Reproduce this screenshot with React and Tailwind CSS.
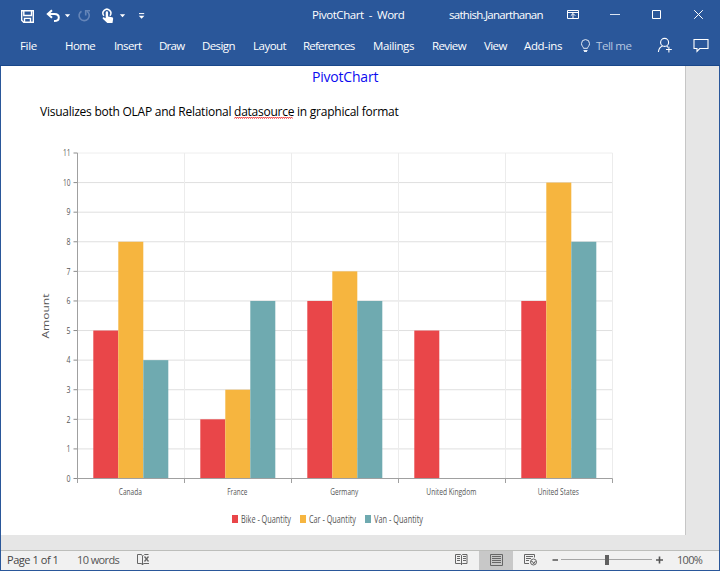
import React from 'react';

const tabs = [
  { label: 'File', width: 'w-[45px]', text: 'tracking-[-0.35px]' },
  { label: 'Home', width: 'w-[49px]', text: 'tracking-[-0.6px]' },
  { label: 'Insert', width: 'w-[45px]', text: 'tracking-[-0.6px]' },
  { label: 'Draw', width: 'w-[43px]', text: 'tracking-[-0.75px]' },
  { label: 'Design', width: 'w-[51px]', text: 'tracking-[-0.6px]' },
  { label: 'Layout', width: 'w-[50px]', text: 'tracking-[-0.5px]' },
  { label: 'References', width: 'w-[70px]', text: 'tracking-[-0.8px]' },
  { label: 'Mailings', width: 'w-[59px]', text: 'tracking-[-0.4px]' },
  { label: 'Review', width: 'w-[52px]', text: 'tracking-[-0.6px]' },
  { label: 'View', width: 'w-[40px]', text: 'tracking-[-0.6px]' },
  { label: 'Add-ins', width: 'w-[56px]', text: 'tracking-[-0.35px]' },
];

const series = [
  { name: 'Bike - Quantity', color: '#e94649', values: [5, 2, 6, 5, 6], x: 232, width: 50 },
  { name: 'Car - Quantity', color: '#f6b53f', values: [8, 3, 7, 0, 10], x: 300, width: 47 },
  { name: 'Van - Quantity', color: '#6faab0', values: [4, 6, 6, 0, 8], x: 365, width: 49 },
];

const categories = [
  { name: 'Canada', width: 23 },
  { name: 'France', width: 20 },
  { name: 'Germany', width: 28 },
  { name: 'United Kingdom', width: 50 },
  { name: 'United States', width: 41 },
];

// Plot area of the chart, in svg units
const LEFT = 77.5;
const RIGHT = 612.5;
const TOP = 27;
const BOTTOM = 352.5;
const BAND = 107;
const BAR = 25;

const yFor = (value) => BOTTOM - (value * (BOTTOM - TOP)) / 11;

function QuickAccess() {
  return (
    <svg width="150" height="30" viewBox="0 0 150 30" fill="none" stroke="#fff">
      {/* save */}
      <path d="M1.7 10.7h11.6v11.6H3.7l-2-2z" strokeWidth="1.4" />
      <path d="M3.8 11v4.500h7.700V11M4.500 22v-3.600h6V22" strokeWidth="1.4" />
      {/* undo */}
      <path d="M32 10.2l-4.2 3.8 4.2 3.8M28.3 14h6.2c3 0 4.3 1.6 4.3 3.5s-1.6 3.6-4.8 3.6" strokeWidth="2" />
      <path d="M44.8 14.3h5.4l-2.7 3z" fill="#fff" stroke="none" />
      {/* redo */}
      <g stroke="#6585b8" strokeWidth="1.6">
        <path d="M61.5 11.2a5.1 5.1 0 1 0 5.5 .1" />
        <path d="M70 10.8h-4.3v4.6" />
      </g>
      {/* touch mode */}
      <path d="M83.9 15.7a3.9 3.9 0 1 1 6 0" strokeWidth="1.5" />
      <path
        d="M85.7 12.5c0-1.6 2.4-1.6 2.4 0v4l4 .8c1 .3 1.2 1 1 2l-.6 3.7h-5.2l-4.5-4.3c-.6-.8.4-1.7 1.3-1.2l1.6.8z"
        fill="#fff"
        stroke="none"
      />
      <path d="M99.8 14.3h5.4l-2.7 3z" fill="#fff" stroke="none" />
      <path d="M119 13.6h5.2" />
      <path d="M118.8 15.8h5.6l-2.8 3z" fill="#fff" stroke="none" />
    </svg>
  );
}

function WindowButtons() {
  return (
    <svg width="150" height="30" viewBox="0 0 150 30" fill="none" stroke="#fff">
      <path d="M8.500 10.500h11v8h-11zM8.500 12.500h11M14 18v-4.500M11.800 15.700l2.200-2.200 2.200 2.200" />
      <path d="M51 14.500h10" stroke="#dbe4f1" />
      <path d="M93.500 10.500h8v8h-8z" />
      <path d="M135.200 10.200l8.600 8.600M143.800 10.200l-8.600 8.600" />
    </svg>
  );
}

function Header() {
  return (
    <header className="h-[66px] bg-[#2a579a] border-b border-[#19478a] text-white text-[11.5px] select-none">
      <div className="flex h-[30px] pl-5">
        <QuickAccess />
        <div className="ml-[142px] w-[137px] leading-[30px] whitespace-pre tracking-[-0.45px]">PivotChart  -  Word</div>
        <div className="w-[110px] leading-[30px] tracking-[-0.7px]">sathish.Janarthanan</div>
        <WindowButtons />
      </div>
      <nav className="flex h-[35px] pl-5 leading-[31px] whitespace-nowrap">
        {tabs.map((tab) => (
          <div key={tab.label} className={`${tab.width} ${tab.text} shrink-0`}>{tab.label}</div>
        ))}
        <svg width="16" height="32" viewBox="0 0 16 32" fill="none" stroke="#e5ecf6" className="shrink-0">
          <path d="M3.5 18.3c0-1.4-2-2.3-2-4.7a4 4 0 0 1 8 0c0 2.4-2 3.3-2 4.7zM3.5 20.5h4M4 21.5h3" />
        </svg>
        <div className="w-[60px] shrink-0 text-[#b8c8e0] tracking-[-0.45px]">Tell me</div>
        <svg width="60" height="32" viewBox="0 0 60 32" fill="none" stroke="#fff" strokeWidth="1.1" className="shrink-0">
          <circle cx="8.6" cy="12.4" r="4" />
          <path d="M2.4 22c.3-3 1.8-5 4.2-5.9M10.6 16.2l1.4 1M10 19.5h5.8M12.9 16.7v5.7" />
          <path d="M38 9.500h14v9h-8.300l-2.700 2.800v-2.800h-3z" />
        </svg>
      </nav>
    </header>
  );
}

// Spell checker mark: 29 short waves under a word
function Squiggle() {
  return (
    <svg width="60" height="4" viewBox="0 0 60 4" fill="none" className="absolute left-0 top-[13px]">
      <path d={`M0.5 2.5${'l1 -1.5l1 1.5'.repeat(29)}`} stroke="#f03030" strokeWidth="0.9" />
    </svg>
  );
}

function PivotChart() {
  const ticks = Array.from({ length: 12 }, (_, i) => i);

  return (
    <svg width="684" height="409" viewBox="1 0 684 409" className="block">
      <g fontFamily="'Open Sans', 'Noto Sans', sans-serif" fill="#555">
        {ticks.map((t) => (
          <g key={t}>
            <path d={`M${LEFT} ${yFor(t)}H${RIGHT}`} stroke={t === 11 ? '#eeeeee' : '#dfdfdf'} />
            <path d={`M73.5 ${yFor(t)}H${LEFT}`} stroke="#8c8c8c" />
            <text
              x="70.5"
              y={yFor(t) + 3.3}
              fontSize="9"
              textAnchor="end"
              textLength={t > 9 ? 7.5 : 4}
              lengthAdjust="spacingAndGlyphs"
            >
              {t}
            </text>
          </g>
        ))}
        {categories.map((c, i) => (
          <path key={c.name} d={`M${LEFT + BAND * (i + 1)} ${TOP}V${BOTTOM}`} stroke="#ececec" />
        ))}
        {series.map((s, n) =>
          s.values.map((v, i) => (
            <rect
              key={`${n}-${i}`}
              x={93.3 + i * BAND + n * BAR}
              y={yFor(v)}
              width={BAR}
              height={BOTTOM - yFor(v)}
              fill={s.color}
            />
          ))
        )}
        <path d={`M${LEFT} ${TOP}V357M${LEFT} ${BOTTOM}H${RIGHT}`} stroke="#a0a0a0" />
        {categories.map((c, i) => (
          <g key={c.name}>
            <path d={`M${LEFT + BAND * (i + 1)} ${BOTTOM}V357`} stroke="#a0a0a0" />
            <text
              x={LEFT - 0.7 + BAND * (i + 0.5)}
              y="369"
              fontSize="9"
              textAnchor="middle"
              textLength={c.width}
              lengthAdjust="spacingAndGlyphs"
            >
              {c.name}
            </text>
          </g>
        ))}
        <text transform="translate(49 212.5) rotate(-90)" fontSize="9" textLength="45" lengthAdjust="spacingAndGlyphs">
          Amount
        </text>
        {series.map((s) => (
          <g key={s.name}>
            <rect x={s.x} y="389" width="6" height="8" fill={s.color} />
            <text x={s.x + 9} y="397" fontSize="10" textLength={s.width} lengthAdjust="spacingAndGlyphs">
              {s.name}
            </text>
          </g>
        ))}
      </g>
    </svg>
  );
}

function StatusBar() {
  return (
    <footer className="flex h-[20px] shrink-0 border-t border-[#bdbebb] bg-[#f1f1f1] text-[11px] leading-[18px] text-[#444] whitespace-nowrap">
      <div className="ml-[6px] w-[70px] tracking-[-0.45px]">Page 1 of 1</div>
      <div className="w-[58px] tracking-[-0.6px] text-[#555]">10 words</div>
      <svg width="16" height="19" viewBox="-1 0 16 19" fill="none" stroke="#666">
        <path d="M6.5 14V5L5.5 3.5h-4v9h4l1 1.5 1-1.5h5.5M7.5 4.5l1-1h4" />
        <path d="M8.5 5.5l4 5M12.5 5.5l-4 5" strokeWidth="1.3" />
      </svg>
      <svg width="86" height="19" viewBox="453 0 86 19" className="ml-[302px]" fill="none" stroke="#666">
        <path d="M461.5 14V4.5l-1-1h-5v9h5l1 1 1-1h4.5v-9h-4.5l-1 1" />
        <path d="M457 5.5h3M457 7.5h3M457 9.5h3M463 5.5h3M463 7.5h3M463 9.5h3" />
        <path d="M479 0h34v19h-34z" fill="#c8c8c8" stroke="none" />
        <path d="M490.5 3.5h12v11h-12z" />
        <path d="M492 5.5h9M492 7.5h9M492 9.5h9M492 11.5h9" />
        <path d="M529 12.5h-4.500v-9h10v3M526 5.500h7M526 7.500h5M526 9.500h3" />
        <circle cx="533.5" cy="11" r="3" />
        <path d="M531 10l2 1 .500 2 2-3" />
      </svg>
      <svg width="120" height="19" viewBox="0 0 120 19" className="ml-[12px]" fill="none">
        <path d="M1.500 9h5.500M105 9h7M108.500 5.500v7" stroke="#555" strokeWidth="1.6" />
        <path d="M10 8.500h91" stroke="#a5a5a5" />
        <path d="M54 4h4v10h-4z" fill="#606060" />
      </svg>
      <div className="ml-[6px] tracking-[-0.7px] text-[#555]">100%</div>
    </footer>
  );
}

export default function App() {
  return (
    <div className="flex flex-col w-[720px] h-[571px] bg-[#2a579a] overflow-hidden font-['Open_Sans','Noto_Sans',sans-serif]">
      <Header />
      <main className="mx-px flex h-[484px] shrink-0 bg-[#e6e6e6]">
        <section className="w-[685px] h-[469px] bg-white border-r border-[#c6c6c6]">
          <h1 className="h-[24px] pl-[311px] text-[14px] leading-[22px] tracking-[-0.2px] text-[#0b0bf0]">PivotChart</h1>
          <p className="h-[36px] pl-[39px] pt-[13px] text-[12px] leading-[18px] tracking-[-0.25px] text-black whitespace-nowrap">
            Visualizes both OLAP and Relational{' '}
            <span className="relative inline-block">
              datasource
              <Squiggle />
            </span>
            {' '}in graphical format
          </p>
          <PivotChart />
        </section>
      </main>
      <div className="mx-px">
        <StatusBar />
      </div>
    </div>
  );
}
